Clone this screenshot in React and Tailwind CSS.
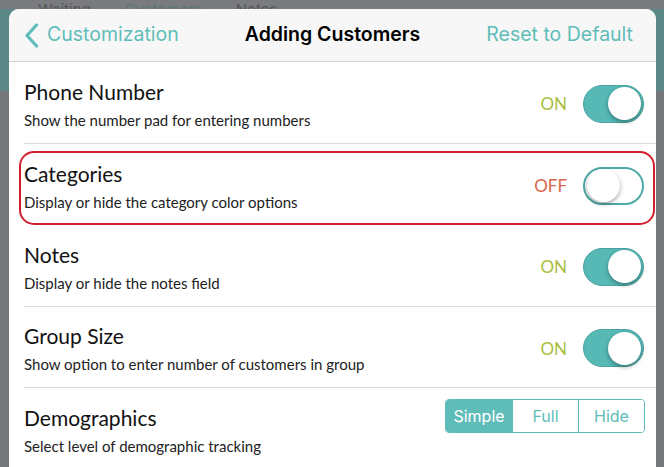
import { useState } from "react";

const rows = [
  { key: "phone", title: "Phone Number", sub: "Show the number pad for entering numbers", on: true },
  { key: "categories", title: "Categories", sub: "Display or hide the category color options", on: false, marked: true },
  { key: "notes", title: "Notes", sub: "Display or hide the notes field", on: true },
  { key: "group", title: "Group Size", sub: "Show option to enter number of customers in group", on: true },
];

const Toggle = ({ on, onClick }) => (
  <button
    onClick={onClick}
    className={`relative w-[61px] h-[38px] rounded-full flex items-center px-[2px] ${
      on ? "bg-[#56b9b6] border border-[#4aa3a0] justify-end" : "bg-white border-2 border-[#4fa9a6] justify-start"
    }`}
  >
    <span className="w-[33px] h-[33px] rounded-full bg-white shadow-[0_2px_4px_rgba(0,0,0,0.35)]" />
  </button>
);

const App = () => {
  const [state, setState] = useState(
    Object.fromEntries(rows.map((r) => [r.key, r.on]))
  );
  const [level, setLevel] = useState("Simple");

  return (
    <div className="relative w-[664px] h-[467px] overflow-hidden bg-[#76777b] font-['Lato',sans-serif]">
      {/* app behind the sheet */}
      <div className="h-[9px] bg-[#7a7b7f] flex gap-[34px] pl-[38px] text-[15px] leading-[18px] text-[#55565a] font-['Inter',sans-serif] overflow-hidden">
        <span className="mt-[1px]">Waiting</span>
        <span className="mt-[1px] text-[#5a7776]">Customers</span>
        <span className="mt-[1px]">Notes</span>
      </div>
      <div className="h-[82px] bg-[#5b8886]" />

      {/* sheet */}
      <div className="absolute left-[9px] top-[9px] w-[647px] h-[470px] bg-white rounded-t-[10px] overflow-hidden">
        <div className="h-[53px] bg-[#f7f7f7] border-b border-[#d3d3d3] flex items-center justify-between pl-[15px] pr-[23px] font-['Inter',sans-serif]">
          <button className="flex items-center gap-[8px] text-[#5fbdb9] text-[19.5px]">
            <svg width="15" height="25" viewBox="0 0 15 25" fill="none">
              <path d="M12.5 2L3 12.5L12.5 23" stroke="#5fbdb9" strokeWidth="3.2" strokeLinecap="round" strokeLinejoin="round" />
            </svg>
            Customization
          </button>
          <h1 className="absolute left-0 right-0 text-center pointer-events-none text-[19.5px] font-semibold text-black">
            Adding Customers
          </h1>
          <button className="text-[#5fbdb9] text-[19.5px]">Reset to Default</button>
        </div>

        {rows.map((r) => (
          <div key={r.key} className="pl-[15px]">
            <div
              className={`h-[81.5px] flex items-center justify-between pr-[12px] ${
                r.marked ? "relative" : "border-b border-[#dcdcdc]"
              }`}
            >
              {r.marked && (
                <div className="absolute left-[-5px] right-[1px] top-[7px] bottom-[0px] border-2 border-[#d4202e] rounded-[15px] pointer-events-none" />
              )}
              <div className="pt-[4px]">
                <div className="text-[21px] leading-[26px] text-[#111]">{r.title}</div>
                <div className="text-[15px] leading-[20px] mt-[5px] text-[#222]">{r.sub}</div>
              </div>
              <div className="flex items-center gap-[16px] pt-[3px]">
                <span className={`text-[17px] ${state[r.key] ? "text-[#a9be3c]" : "text-[#d8664b]"}`}>
                  {state[r.key] ? "ON" : "OFF"}
                </span>
                <Toggle on={state[r.key]} onClick={() => setState({ ...state, [r.key]: !state[r.key] })} />
              </div>
            </div>
          </div>
        ))}

        <div className="pl-[15px]">
          <div className="h-[81.5px] flex items-center justify-between pr-[11px]">
            <div className="pt-[4px]">
              <div className="text-[21px] leading-[26px] text-[#111]">Demographics</div>
              <div className="text-[15px] leading-[20px] mt-[5px] text-[#222]">Select level of demographic tracking</div>
            </div>
            <div className="flex -mt-[26px] border border-[#5fbdb9] rounded-[4px] overflow-hidden font-['Inter',sans-serif] text-[16px]">
              {["Simple", "Full", "Hide"].map((l, i) => (
                <button
                  key={l}
                  onClick={() => setLevel(l)}
                  className={`w-[66px] h-[32px] ${i > 0 ? "border-l border-[#5fbdb9]" : ""} ${
                    level === l ? "bg-[#5fbdb9] text-white" : "bg-white text-[#5fbdb9]"
                  }`}
                >
                  {l}
                </button>
              ))}
            </div>
          </div>
        </div>
      </div>
    </div>
  );
};

export default App;
